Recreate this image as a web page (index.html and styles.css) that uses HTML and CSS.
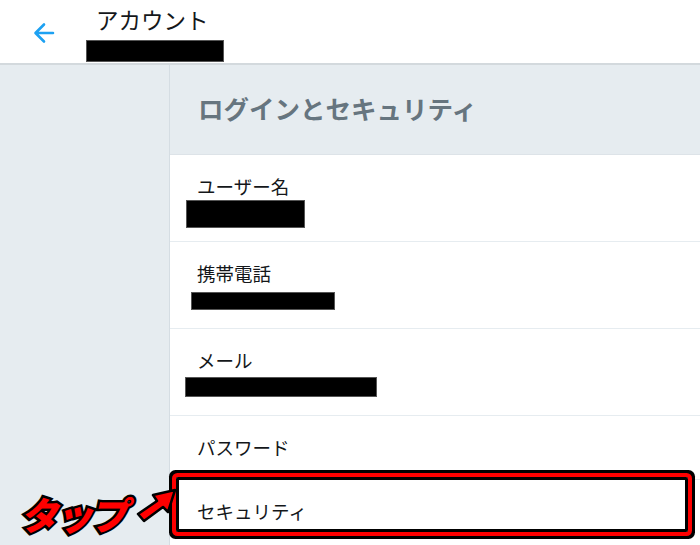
FILE: index.html
```html
<!DOCTYPE html>
<html lang="ja">
<head>
<meta charset="utf-8">
<link rel="stylesheet" href="styles.css">
</head>
<body>
<div class="page">
  <header class="topbar">
    <div class="back">
      <svg width="22" height="22" viewBox="0 0 22 22"><path d="M20 11H3M11 2.5L2.5 11L11 19.5" fill="none" stroke="#1da1f2" stroke-width="2.6" stroke-linecap="round" stroke-linejoin="round"/></svg>
    </div>
    <div class="titles">
      <div class="title">アカウント</div>
      <div class="redact redact-title"></div>
    </div>
  </header>
  <div class="body">
    <aside class="side"></aside>
    <main class="content">
      <div class="section-head">ログインとセキュリティ</div>
      <div class="row tall">
        <div class="label">ユーザー名</div>
        <div class="redact r1"></div>
      </div>
      <div class="row tall">
        <div class="label">携帯電話</div>
        <div class="redact r2"></div>
      </div>
      <div class="row tall">
        <div class="label">メール</div>
        <div class="redact r3"></div>
      </div>
      <div class="row short">
        <div class="label">パスワード</div>
      </div>
      <div class="row last">
        <div class="label">セキュリティ</div>
        <div class="highlight"></div>
      </div>
    </main>
  </div>
  <div class="tap">タップ</div>
  <svg class="tap-arrow" width="50" height="50" viewBox="0 0 50 50">
    <path d="M3 40 L22 27 L18 21 L40 16 L33 38 L28 33 L9 47 Z" fill="#ff0000" stroke="#000" stroke-width="2.5" stroke-linejoin="round"/>
  </svg>
</div>
</body>
</html>
```
FILE: styles.css
```css
* { box-sizing: border-box; }
html, body { margin: 0; padding: 0; }
body {
  width: 700px;
  height: 545px;
  overflow: hidden;
  font-family: "Noto Sans CJK JP", "Noto Sans", sans-serif;
  background: #e6ecf0;
}
.page { position: relative; width: 700px; height: 545px; }
.topbar {
  height: 65px;
  background: #fff;
  border-bottom: 2px solid #d3d9dd;
  display: flex;
  align-items: flex-start;
}
.back {
  width: 86px;
  padding: 22px 0 0 33px;
}
.back svg { display: block; }
.titles { padding-top: 4px; }
.title {
  font-size: 22.5px;
  line-height: 30px;
  color: #14171a;
  margin-left: 10px;
}
.redact {
  background: #000;
  border: 1px solid #555;
}
.redact-title { width: 138px; height: 22px; margin-top: 6px; }
.body { display: flex; height: 480px; }
.side {
  width: 170px;
  background: #e6ecf0;
  border-right: 1px solid #d5dde3;
}
.content { flex: 1; display: flex; flex-direction: column; }
.section-head {
  height: 90px;
  padding: 24px 0 0 28px;
  font-size: 25.5px;
  font-weight: 700;
  color: #66757f;
  line-height: 38px;
  border-bottom: 1px solid #dde3e8;
}
.row {
  background: #fff;
  border-bottom: 1px solid #e6ecf0;
  padding: 20px 0 0 27px;
  position: relative;
}
.row.tall { height: 87px; }
.row.short { height: 64px; }
.row.last { flex: 1; border-bottom: none; }
.label {
  font-size: 18.5px;
  line-height: 22px;
  color: #14171a;
}
.r1 { width: 119px; height: 28px; margin: 3px 0 0 -11px; }
.r2 { width: 144px; height: 18px; margin: 8px 0 0 -6px; }
.r3 { width: 192px; height: 20px; margin: 6px 0 0 -12px; }
.highlight {
  position: absolute;
  left: 6px;
  top: -3px;
  width: 512px;
  height: 55px;
  border: 3px solid #000;
  box-shadow: 0 0 0 4px #ff0000, 0 0 0 7px #000;
  border-radius: 2px;
}
.tap {
  position: absolute;
  left: 24px;
  top: 490px;
  font-size: 38px;
  line-height: 48px;
  font-weight: 900;
  color: #ff0000;
  -webkit-text-stroke: 5px #000;
  paint-order: stroke fill;
  transform: skewX(-12deg);
  letter-spacing: -3px;
}
.tap-arrow {
  position: absolute;
  left: 135px;
  top: 474px;
}
```
